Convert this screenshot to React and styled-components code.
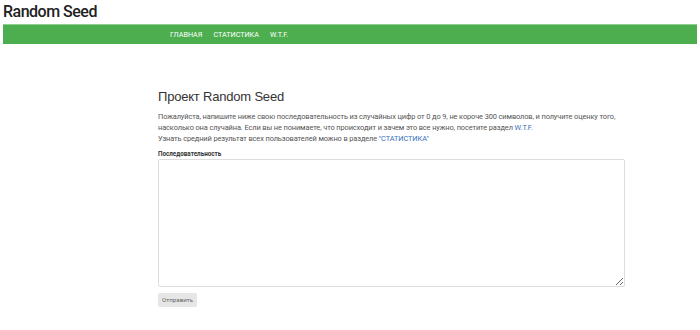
import React from 'react';
import styled, { createGlobalStyle } from 'styled-components';

const GlobalStyle = createGlobalStyle`
  body {
    margin: 0;
    background: #fff;
    font-family: Roboto, "Noto Sans", sans-serif;
  }
`;

const Page = styled.div`
  padding: 0 3px;
`;

const SiteTitle = styled.h1`
  margin: 0;
  padding-top: 2px;
  height: 22px;
  font-size: 16px;
  line-height: 20px;
  font-weight: 500;
  color: #222;
  letter-spacing: -0.5px;
`;

const NavBar = styled.nav`
  display: flex;
  align-items: center;
  gap: 11px;
  height: 19px;
  padding-left: 167px;
  background: #4cae4f;
  border-top: 1px solid #8fd090;
`;

const NavLink = styled.a`
  color: #fff;
  font-size: 7.2px;
  text-decoration: none;
`;

const Main = styled.main`
  width: 467px;
  margin: 45px auto 0 155px;
`;

const Heading = styled.h2`
  margin: 0 0 6px;
  font-family: "Liberation Sans", Arial, sans-serif;
  font-size: 13px;
  line-height: 16px;
  font-weight: 400;
  letter-spacing: -0.2px;
  color: #333;
`;

const Text = styled.p`
  margin: 0;
  font-size: 7.4px;
  line-height: 11px;
  letter-spacing: -0.1px;
  color: #555;
`;

const Link = styled.a`
  color: #3a72b8;
  text-decoration: none;
`;

const Label = styled.label`
  display: block;
  margin: 6px 0 1px;
  font-size: 6.3px;
  line-height: 8px;
  font-weight: 700;
  color: #333;
`;

const TextArea = styled.textarea`
  display: block;
  box-sizing: border-box;
  width: 467px;
  height: 128px;
  border: 1px solid #ddd;
  border-radius: 2px;
  resize: vertical;
`;

const Button = styled.button`
  margin-top: 6px;
  height: 14px;
  padding: 0 4px;
  border: none;
  border-radius: 2px;
  background: #e6e6e6;
  color: #666;
  font-family: Roboto, sans-serif;
  font-size: 6.2px;
`;

export default function App() {
  return (
    <Page>
      <GlobalStyle />
      <SiteTitle>Random Seed</SiteTitle>
      <NavBar>
        <NavLink href="#">ГЛАВНАЯ</NavLink>
        <NavLink href="#">СТАТИСТИКА</NavLink>
        <NavLink href="#">W.T.F.</NavLink>
      </NavBar>
      <Main>
        <Heading>Проект Random Seed</Heading>
        <Text>
          Пожалуйста, напишите ниже свою последовательность из случайных цифр от 0 до 9, не короче 300 символов, и получите оценку того, насколько она случайна. Если вы не понимаете, что происходит и зачем это все нужно, посетите раздел <Link href="#">W.T.F.</Link>
          <br />
          Узнать средний результат всех пользователей можно в разделе <Link href="#">"СТАТИСТИКА"</Link>
        </Text>
        <Label>Последовательность</Label>
        <TextArea />
        <Button>Отправить</Button>
      </Main>
    </Page>
  );
}
